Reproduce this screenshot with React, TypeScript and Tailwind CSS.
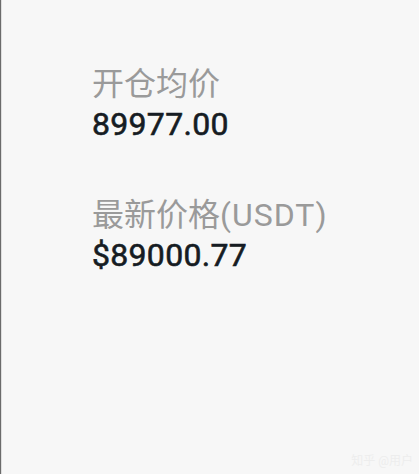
export default function App() {
  const font = { fontFamily: 'Roboto, "Noto Sans CJK SC", sans-serif' };
  return (
    <div
      className="relative w-[419px] h-[474px] bg-[#f7f7f7] border-l border-l-[#6b6b6b] overflow-hidden"
      style={font}
    >
      <div className="h-full border-l border-l-[#dedede] pl-[90px] pt-[64px] flex flex-col">
        <div className="flex flex-col">
          <span className="text-[32px] leading-[41px] text-[#9a9a9a]">开仓均价</span>
          <span className="text-[32px] leading-[38px] font-normal tracking-[0.3px] [-webkit-text-stroke:0.6px_#161c23] text-[#161c23]">
            89977.00
          </span>
        </div>
        <div className="flex flex-col mt-[52px]">
          <span className="text-[32px] leading-[41px] text-[#9a9a9a]">
            最新价格<span className="tracking-[1px]">(USDT)</span>
          </span>
          <span className="text-[32px] leading-[38px] font-normal tracking-[0.3px] [-webkit-text-stroke:0.6px_#161c23] text-[#161c23]">
            $89000.77
          </span>
        </div>
      </div>
      <div className="absolute right-[6px] bottom-[4px] text-[12px] text-[#ededed]">知乎 @用户</div>
    </div>
  );
}
